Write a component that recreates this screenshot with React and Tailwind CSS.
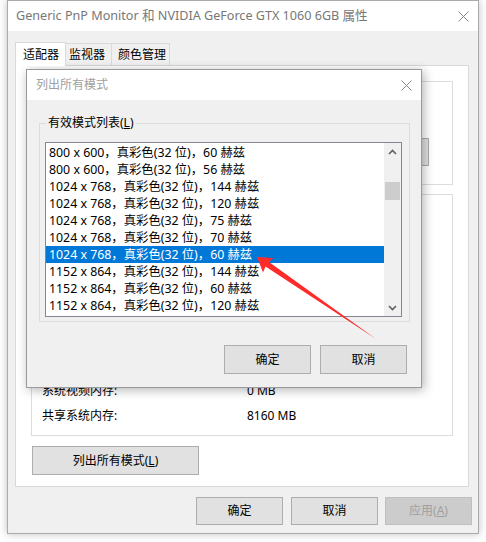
import React from "react";

const modes = [
  "800 x 600，真彩色(32 位)，60 赫兹",
  "800 x 600，真彩色(32 位)，56 赫兹",
  "1024 x 768，真彩色(32 位)，144 赫兹",
  "1024 x 768，真彩色(32 位)，120 赫兹",
  "1024 x 768，真彩色(32 位)，75 赫兹",
  "1024 x 768，真彩色(32 位)，70 赫兹",
  "1024 x 768，真彩色(32 位)，60 赫兹",
  "1152 x 864，真彩色(32 位)，144 赫兹",
  "1152 x 864，真彩色(32 位)，60 赫兹",
  "1152 x 864，真彩色(32 位)，120 赫兹",
];

function Btn({ children, className = "", disabled = false }) {
  return (
    <div
      className={
        "flex items-center justify-center border text-[12px] " +
        (disabled
          ? "bg-[#cccccc] border-[#bfbfbf] text-[#a0a0a0] "
          : "bg-[#e1e1e1] border-[#adadad] text-black ") +
        className
      }
    >
      {children}
    </div>
  );
}

function XIcon() {
  return (
    <svg width="11" height="11" viewBox="0 0 11 11">
      <path d="M0.5 0.5L10.5 10.5M10.5 0.5L0.5 10.5" stroke="#888" strokeWidth="1" fill="none" />
    </svg>
  );
}

function Chevron({ up }) {
  return (
    <svg width="9" height="6" viewBox="0 0 9 6">
      <path
        d={up ? "M1 5L4.5 1.5L8 5" : "M1 1L4.5 4.5L8 1"}
        stroke="#606060"
        strokeWidth="1.6"
        fill="none"
      />
    </svg>
  );
}

export default function App() {
  return (
    <div className="relative w-[486px] h-[542px] bg-white overflow-hidden font-['Noto_Sans','Noto_Sans_CJK_SC',sans-serif] text-black">
      {/* main window */}
      <div className="ml-[7px] w-[472px] h-[534px] border border-[#aaaaaa] flex flex-col shadow-[0_0_8px_rgba(0,0,0,0.25)] bg-[#f0f0f0]">
        <div className="h-[30px] bg-white flex items-center pl-[8px] pr-[9px] justify-between">
          <span className="text-[12.6px] text-[#777777]">Generic PnP Monitor 和 NVIDIA GeForce GTX 1060 6GB 属性</span>
          <XIcon />
        </div>
        <div className="flex-1 flex flex-col">
          {/* tabs */}
          <div className="flex items-end ml-[7px] mt-[10px] h-[24px]">
            <div className="w-[51px] h-[24px] bg-white border border-[#d9d9d9] border-b-0 relative z-10 -mb-px flex items-center pl-[7px] text-[12px]">
              适配器
            </div>
            <div className="w-[46px] h-[22px] border border-[#d9d9d9] border-b-0 border-l-0 flex items-center pl-[3px] text-[12px]">
              监视器
            </div>
            <div className="w-[58px] h-[22px] border border-[#d9d9d9] border-b-0 border-l-0 flex items-center pl-[6px] text-[12px]">
              颜色管理
            </div>
          </div>
          {/* panel */}
          <div className="ml-[7px] w-[454px] h-[422px] bg-white border border-[#d9d9d9] flex flex-col px-[15px]">
            <div className="mt-[15px] h-[104px] border border-[#dcdcdc] flex flex-col items-end pr-[23px]">
              <Btn className="mt-[56px] w-[87px] h-[28px]">属性(<u>P</u>)</Btn>
            </div>
            <div className="mt-[9px] h-[242px] border border-[#dcdcdc] flex flex-col justify-end pb-[7px] pl-[10px] text-[12px]">
              <div className="h-[25px] flex items-center">
                <span className="w-[205px]">系统视频内存:</span>
                <span>0 MB</span>
              </div>
              <div className="h-[25px] flex items-center">
                <span className="w-[205px]">共享系统内存:</span>
                <span>8160 MB</span>
              </div>
            </div>
            <Btn className="mt-[10px] w-[167px] h-[29px] ml-[1px]">
              列出所有模式(<u>L</u>)
            </Btn>
          </div>
          {/* bottom buttons */}
          <div className="flex justify-end pr-[6px] mt-[10px]">
            <Btn className="w-[87px] h-[28px]">确定</Btn>
            <Btn className="w-[87px] h-[28px] ml-[8px]">取消</Btn>
            <Btn disabled className="w-[87px] h-[28px] ml-[7px]">
              应用(<u>A</u>)
            </Btn>
          </div>
        </div>
      </div>

      {/* dialog: 列出所有模式 */}
      <div className="absolute left-[26px] top-[69px] w-[396px] h-[319px] border border-[#9a9a9a] bg-[#f0f0f0] flex flex-col shadow-[2px_2px_10px_rgba(0,0,0,0.3)]">
        <div className="h-[30px] bg-white flex items-center justify-between pl-[9px] pr-[9px]">
          <span className="text-[12px] text-[#a0a0a0]">列出所有模式</span>
          <XIcon />
        </div>
        <div className="flex-1 flex flex-col">
          <div className="relative mt-[23px] ml-[12px] w-[371px] h-[199px] border border-[#dcdcdc]">
            <span className="absolute left-[6px] -top-[9px] bg-[#f0f0f0] px-[2px] text-[12px] leading-[16px]">
              有效模式列表(<u>L</u>)
            </span>
            <div className="mt-[18px] ml-[5px] w-[357px] h-[175px] border border-[#828790] bg-white flex">
              <div className="flex-1 pt-px">
                {modes.map((m, i) => (
                  <div
                    key={i}
                    className={
                      "h-[17px] leading-[17px] pl-[3px] text-[12.35px] whitespace-nowrap overflow-hidden " +
                      (i === 6 ? "bg-[#0078d7] text-white" : "")
                    }
                  >
                    {m}
                  </div>
                ))}
              </div>
              <div className="w-[17px] bg-[#f0f0f0] flex flex-col items-center">
                <div className="h-[17px] flex items-center justify-center">
                  <Chevron up />
                </div>
                <div className="mt-[22px] w-[15px] h-[18px] bg-[#cdcdcd]" />
                <div className="flex-1" />
                <div className="h-[17px] flex items-center justify-center">
                  <Chevron />
                </div>
              </div>
            </div>
          </div>
          <div className="flex justify-end mt-[23px] pr-[14px]">
            <Btn className="w-[87px] h-[29px]">确定</Btn>
            <Btn className="w-[87px] h-[29px] ml-[9px]">取消</Btn>
          </div>
        </div>
      </div>

      {/* red annotation arrow */}
      <svg className="absolute left-0 top-0 pointer-events-none" width="486" height="542" viewBox="0 0 486 542">
        <polygon
          points="257,257 273.5,258 269,262 376,339 265.5,266.5 263,272.5"
          fill="#ff2b2b"
        />
      </svg>
    </div>
  );
}
